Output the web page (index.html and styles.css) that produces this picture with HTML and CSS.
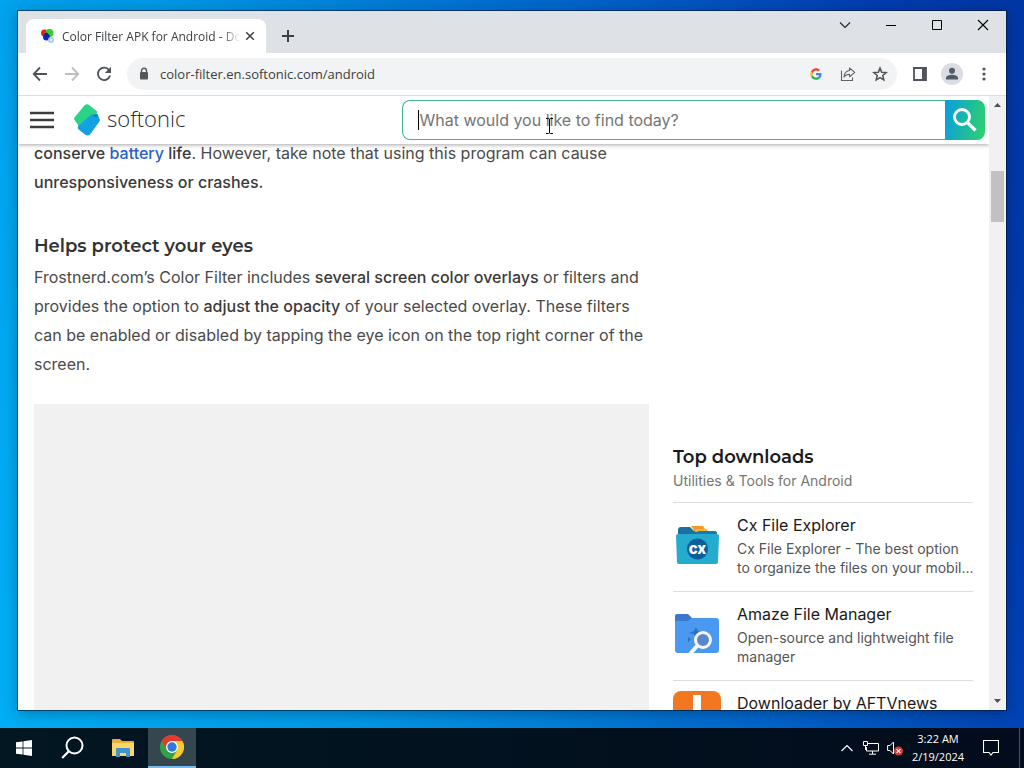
FILE: index.html
```html
<!DOCTYPE html>
<html lang="en">
<head>
    <meta charset="UTF-8">
    <meta name="viewport" content="width=device-width, initial-scale=1.0">
    <title>Color Filter APK for Android - Download</title>
    <link rel="stylesheet" href="styles.css">
</head>
<body>
    <div class="desktop">
        <div class="window">
            <!-- Tab strip -->
            <div class="tab-strip">
                <div class="tab">
                    <svg class="favicon" width="16" height="16" viewBox="0 0 16 16" aria-hidden="true">
                        <circle cx="4.500" cy="5" r="3.500" fill="#d8231c"/>
                        <circle cx="9.500" cy="5" r="4" fill="#2fd12f"/>
                        <circle cx="6.500" cy="9" r="3.500" fill="#1620c8"/>
                        <path d="M5 5a4 4 0 0 1 3 0L6.500 9z" fill="#20242a"/>
                        <circle cx="11" cy="12" r="3" fill="#a9cdf3"/>
                        <circle cx="11" cy="12" r="1" fill="#fff"/>
                    </svg>
                    <span class="tab-title">Color Filter APK for Android - Do</span>
                    <button class="tab-close" aria-label="Close tab">
                        <svg width="10" height="10" viewBox="0 0 10 10"><path d="M1.2 1.2l7.6 7.6M8.8 1.2L1.2 8.8" stroke="#3c4043" stroke-width="1.5"/></svg>
                    </button>
                </div>
                <button class="new-tab" aria-label="New tab">
                    <svg width="14" height="14" viewBox="0 0 14 14"><path d="M7 1v12M1 7h12" stroke="#3c4043" stroke-width="2"/></svg>
                </button>
                <div class="window-buttons">
                    <button aria-label="Search tabs"><svg width="12" height="12" viewBox="0 0 12 12"><path d="M1 3.5l5 5 5-5" fill="none" stroke="#222" stroke-width="1.1"/></svg></button>
                    <button aria-label="Minimize"><svg width="12" height="12" viewBox="0 0 12 12"><path d="M1 6.5h10" stroke="#000"/></svg></button>
                    <button aria-label="Maximize"><svg width="12" height="12" viewBox="0 0 12 12"><path d="M1.5 1.5h9v9h-9z" fill="none" stroke="#000"/></svg></button>
                    <button aria-label="Close"><svg width="12" height="12" viewBox="0 0 12 12"><path d="M1 1l10 10M11 1L1 11" stroke="#000" stroke-width="1.1"/></svg></button>
                </div>
            </div>

            <!-- Toolbar -->
            <div class="toolbar">
                <button class="tool" aria-label="Back"><svg width="16" height="16" viewBox="0 0 16 16"><path d="M15 8H2M8 1.5L1.7 8 8 14.5" fill="none" stroke="#50545a" stroke-width="1.8"/></svg></button>
                <button class="tool" aria-label="Forward"><svg width="16" height="16" viewBox="0 0 16 16"><path d="M1 8h13M8 1.5L14.3 8 8 14.5" fill="none" stroke="#bcbec1" stroke-width="1.8"/></svg></button>
                <button class="tool" aria-label="Reload"><svg width="16" height="16" viewBox="0 0 16 16"><path d="M13.2 4.2A6.2 6.2 0 1 0 14.1 9.6" fill="none" stroke="#50545a" stroke-width="1.8"/><path d="M15 .8V7H8.8z" fill="#50545a"/></svg></button>
                <div class="omnibox">
                    <svg class="lock" width="10" height="14" viewBox="0 0 10 14" aria-hidden="true"><path d="M2.5 6V3.7a2.5 2.5 0 0 1 5 0V6" fill="none" stroke="#55585c" stroke-width="1.4"/><rect x="1" y="5" width="8" height="7.5" rx="1" fill="#55585c"/></svg>
                    <input class="address" type="text" aria-label="Address" value="color-filter.en.softonic.com/android">
                    <button class="tool" aria-label="Google search">
                        <svg width="12" height="12" viewBox="0 0 48 48"><path d="M46 24.500c0-1.600-.1-3.100-.4-4.500H24v9h12.400c-.6 3-2.200 5.400-4.700 7.100l7.200 5.600C43.200 37.600 46 31.700 46 24.500z" fill="#4285f4"/><path d="M24 47c6 0 11-2 14.900-5.300l-7.200-5.600C29.700 37.400 27 38.300 24 38.300c-5.900 0-10.800-3.900-12.600-9.200L4 34.800C7.700 42 15.200 47 24 47z" fill="#34a853"/><path d="M11.400 29.100a14 14 0 0 1 0-9.200L4 14.200a23 23 0 0 0 0 20.600z" fill="#fbbc05"/><path d="M24 9.900c3.600 0 6.800 1.200 9.300 3.600l6.300-6.300C35.600 3.500 30.300 1 24 1 15.200 1 7.700 6.100 4 14.200l7.400 5.700C13.200 14.300 18.100 9.900 24 9.900z" fill="#ea4335"/></svg>
                    </button>
                    <button class="tool" aria-label="Share">
                        <svg width="16" height="16" viewBox="0 0 16 16"><path d="M1.500 4.500v10h11v-3" fill="none" stroke="#5f6368" stroke-width="1.1"/><path d="M9.500 2l5.300 4.400-5.300 4.300V8.200C7 8.200 5.300 9 4 11c.2-3.600 2.300-6 5.500-6.500z" fill="none" stroke="#5f6368" stroke-width="1.1" stroke-linejoin="round"/></svg>
                    </button>
                    <button class="tool" aria-label="Bookmark this tab">
                        <svg width="16" height="16" viewBox="0 0 16 16"><path d="M8 2l1.700 4.200 4.500.4-3.400 2.900 1 4.500L8 11.600 4.200 14l1-4.500-3.400-2.900 4.500-.4z" fill="none" stroke="#50545a" stroke-width="1.5"/></svg>
                    </button>
                </div>
                <button class="tool" aria-label="Side panel"><svg width="16" height="16" viewBox="0 0 16 16"><path d="M2 2h12v12H2z" fill="none" stroke="#50545a" stroke-width="1.8"/><path d="M10 2h4v12h-4z" fill="#50545a"/></svg></button>
                <button class="tool" aria-label="Profile"><svg width="22" height="22" viewBox="0 0 22 22"><circle cx="11" cy="11" r="11" fill="#dadce3"/><circle cx="11" cy="7.700" r="3" fill="#525a66"/><path d="M5 16.500v-1.400c0-2.200 3.500-3.300 6-3.300s6 1.100 6 3.300v1.400z" fill="#525a66"/></svg></button>
                <button class="tool" aria-label="Menu"><svg width="4" height="14" viewBox="0 0 4 14"><circle cx="2" cy="2" r="1.600" fill="#50545a"/><circle cx="2" cy="7" r="1.600" fill="#50545a"/><circle cx="2" cy="12" r="1.600" fill="#50545a"/></svg></button>
            </div>

            <!-- Page -->
            <div class="viewport">
                <div class="page">
                    <header class="site-header">
                        <button class="menu-btn" aria-label="Menu"><svg width="24" height="18" viewBox="0 0 24 18"><path d="M0 2h24M0 9h24M0 16h24" stroke="#3c3c3c" stroke-width="2.600"/></svg></button>
                        <a class="logo" href="#">
                            <svg width="26" height="32" viewBox="0 0 26 32" aria-hidden="true">
                                <path d="M4 21.500L16.500 10.500 24 11l1.600 4.300q.6 1.300-.3 2.500L16 30.500q-2.500 2-5 0L4.200 25q-1-1 0-2.200z" fill="#12a2e2"/>
                                <path d="M10.600 1.300q2.200-1.700 4.400-.3l7.700 6q1 .9.300 2l-1 1.500-5 .2L4.500 21.500.5 16q-.9-1.400.2-2.800z" fill="#2bd484"/>
                                <path d="M17 10.700l7-.6-1.600 3.200z" fill="#0f7fae"/>
                            </svg>
                            <span class="logo-text">softonic</span>
                        </a>
                        <form class="search">
                            <input class="search-input" type="search" aria-label="Search" placeholder="What would you like to find today?">
                            <span class="caret"></span>
                            <svg class="pointer" width="7" height="16" viewBox="0 0 7 16" aria-hidden="true"><path d="M0 .5h2.500l1 .6 1-.6H7M3.500 1v14M0 15.500h2.500l1-.6 1 .6H7" fill="none" stroke="#000"/></svg>
                            <button class="search-btn" aria-label="Search"><svg width="26" height="26" viewBox="0 0 26 26"><circle cx="10" cy="10" r="7.500" fill="none" stroke="#fff" stroke-width="2.800"/><path d="M15.300 15.300l8.200 8.200" stroke="#fff" stroke-width="3.200"/></svg></button>
                        </form>
                    </header>
                    <div class="content">
                        <main class="article">
                            <p><strong>conserve <a href="#">battery</a> life</strong>. However, take note that using this program can cause <strong>unresponsiveness or crashes.</strong></p>
                            <h2>Helps protect your eyes</h2>
                            <p>Frostnerd.com’s Color Filter includes <strong>several screen color overlays</strong> or filters and provides the option to <strong>adjust the opacity</strong> of your selected overlay. These filters can be enabled or disabled by tapping the eye icon on the top right corner of the screen.</p>
                            <div class="ad"></div>
                        </main>
                        <aside class="sidebar">
                            <div class="sidebar-slot"></div>
                            <h2>Top downloads</h2>
                            <p class="category">Utilities &amp; Tools for Android</p>
                            <ul class="downloads">
                                <li>
                                    <svg class="app-icon" width="48" height="48" viewBox="0 0 48 48" aria-hidden="true">
                                        <path d="M5 9q0-3 3-3h9l4 4h20q3 0 3 3v8H5z" fill="#1d6f9f"/>
                                        <path d="M18 5h12l4 6H22z" fill="#f59a23"/>
                                        <path d="M22 8h12l2 5H25z" fill="#f7b34c"/>
                                        <path d="M25 10h16q3 0 3 3v4H20z" fill="#1a7aa8"/>
                                        <path d="M3 15q0-2 2-2h38q3 0 3 2l-1 26q0 2-3 2H6q-2 0-2-2z" fill="#25abcd"/>
                                        <circle cx="24.500" cy="28" r="10.500" fill="#0c5d9b"/>
                                        <text class="app-icon-text" x="24.500" y="33" text-anchor="middle">cx</text>
                                    </svg>
                                    <div class="app">
                                        <h3>Cx File Explorer</h3>
                                        <p>Cx File Explorer - The best option<br>to organize the files on your mobil...</p>
                                    </div>
                                </li>
                                <li>
                                    <svg class="app-icon" width="48" height="48" viewBox="0 0 48 48" aria-hidden="true">
                                        <path d="M2 6q0-2 2-2h11l4 4v8H2z" fill="#3a78cf"/>
                                        <path d="M2 11h13l4-3h24q3 0 3 3v29q0 3-3 3H5q-3 0-3-3z" fill="#4a98ef"/>
                                        <path d="M23 17l2 4 4 1-4 2-2 4-2-4-5-1 5-2zM15 27l3 2-3 3z" fill="#2f6fc4"/>
                                        <circle cx="30" cy="30" r="7.500" fill="#5a86cb" stroke="#f4f7fc" stroke-width="3"/>
                                        <path d="M24.500 35.500L17 44" stroke="#f4f7fc" stroke-width="4"/>
                                    </svg>
                                    <div class="app">
                                        <h3>Amaze File Manager</h3>
                                        <p>Open-source and lightweight file manager</p>
                                    </div>
                                </li>
                                <li>
                                    <svg class="app-icon" width="48" height="48" viewBox="0 0 48 48" aria-hidden="true">
                                        <rect width="48" height="48" rx="8" fill="#f37721"/>
                                        <path d="M20 4h8v20h8L24 38 12 24h8z" fill="#fff"/>
                                    </svg>
                                    <div class="app">
                                        <h3>Downloader by AFTVnews</h3>
                                    </div>
                                </li>
                            </ul>
                        </aside>
                    </div>
                </div>
                <div class="scrollbar">
                    <svg class="scroll-arrow" width="7" height="4" viewBox="0 0 7 4"><path d="M0 4l3.500-4L7 4z" fill="#505050"/></svg>
                    <div class="scroll-track"><div class="scroll-thumb"></div></div>
                    <svg class="scroll-arrow" width="7" height="4" viewBox="0 0 7 4"><path d="M0 0l3.500 4L7 0z" fill="#505050"/></svg>
                </div>
            </div>
        </div>
    </div>

    <!-- Taskbar -->
    <div class="taskbar">
        <button class="task" aria-label="Start"><svg width="16" height="16" viewBox="0 0 16 16"><path d="M0 2.300l6.600-.9v6.200H0zM7.400 1.300L16 .1v7.500H7.400zM0 8.400h6.600v6.200L0 13.700zM7.400 8.400H16v7.500l-8.600-1.200z" fill="#fff"/></svg></button>
        <button class="task task-wide" aria-label="Search"><svg width="24" height="24" viewBox="0 0 24 24"><circle cx="13.500" cy="9.500" r="8" fill="none" stroke="#fff" stroke-width="2"/><path d="M7.800 15.200L1.200 22" stroke="#fff" stroke-width="2.200"/></svg></button>
        <button class="task task-wide" aria-label="File Explorer"><svg width="22" height="20" viewBox="0 0 22 20"><path d="M0 2q0-1 1-1h7l2 2h11q1 0 1 1v13H0z" fill="#e9b03a"/><path d="M0 5h22v13H0z" fill="#fbd667"/><path d="M4 11q0-1 1-1h12q1 0 1 1v8h-4v-4H8v4H4z" fill="#3f93cf"/></svg></button>
        <button class="task active" aria-label="Google Chrome"><svg width="24" height="24" viewBox="0 0 24 24"><circle cx="12" cy="12" r="12" fill="#2fa24c"/><path d="M1.600 6A12 12 0 0 1 22.400 6H12l-5.200 9z" fill="#e33b2e"/><path d="M22.400 6A12 12 0 0 1 12 24l5.200-9L12 6z" fill="#fcc934"/><circle cx="12" cy="12" r="6" fill="#fff"/><circle cx="12" cy="12" r="4.700" fill="#2f78dd"/></svg></button>
        <div class="tray">
            <button class="tray-btn" aria-label="Show hidden icons"><svg width="12" height="12" viewBox="0 0 12 12"><path d="M.5 9L6 3.500 11.500 9" fill="none" stroke="#fff" stroke-width="1.200"/></svg></button>
            <button class="tray-btn" aria-label="Network"><svg width="16" height="14" viewBox="0 0 16 14"><path d="M5 2.500h10.500v7.500H3.500V6M9.500 10v3M6 13.200h7M.5.500h4v4h-4zM2.500 4.500V9" fill="none" stroke="#fff"/></svg></button>
            <button class="tray-btn" aria-label="Volume muted"><svg width="16" height="16" viewBox="0 0 16 16"><path d="M.6 5.500H3L6.500 2v12L3 10.500H.6z" fill="none" stroke="#fff"/><circle cx="11.500" cy="11" r="4.500" fill="#d63a36"/><path d="M9.600 9.100l3.800 3.800M13.400 9.100l-3.800 3.800" stroke="#fff" stroke-width="1.200"/></svg></button>
            <div class="clock">
                <span>3:22 AM</span>
                <span>2/19/2024</span>
            </div>
            <button class="notify" aria-label="Notifications"><svg width="16" height="16" viewBox="0 0 16 16"><path d="M.5.500h15v12H10L8 15l-2-2.500H.5z" fill="none" stroke="#fff" stroke-width="1.100"/></svg></button>
            <div class="show-desktop"></div>
        </div>
    </div>
</body>
</html>
```

FILE: styles.css
```css
* {
    box-sizing: border-box;
}

body {
    margin: 0;
    height: 100vh;
    display: flex;
    flex-direction: column;
    overflow: hidden;
    font-family: 'Inter', sans-serif;
    background: linear-gradient(75deg, #00aff6 0%, #0098e6 30%, #0066cc 62%, #003caf 88%, #0036a4 100%);
}

button {
    border: none;
    background: none;
    padding: 0;
    display: flex;
    align-items: center;
    justify-content: center;
    cursor: pointer;
}

h2, h3, p, ul {
    margin: 0;
    padding: 0;
}

.desktop {
    flex: 1;
    min-height: 0;
    display: flex;
    padding: 11px 18px 18px;
}

.window {
    flex: 1;
    min-width: 0;
    display: flex;
    flex-direction: column;
    background: #fff;
    box-shadow: 0 0 0 1px rgba(0, 20, 50, 0.6), 0 3px 14px rgba(0, 0, 0, 0.3);
}

/* Tab strip */
.tab-strip {
    display: flex;
    height: 42px;
    padding-left: 8px;
    background: #dee1e6;
}

.tab {
    display: flex;
    align-items: center;
    width: 240px;
    height: 34px;
    margin-top: 8px;
    padding: 0 8px 0 14px;
    background: #fff;
    border-radius: 8px 8px 0 0;
}

.tab-title {
    flex: 1;
    margin-left: 6px;
    overflow: hidden;
    white-space: nowrap;
    font-family: 'Open Sans', sans-serif;
    font-size: 12px;
    color: #3c4043;
    -webkit-mask-image: linear-gradient(90deg, #000 90%, transparent);
    mask-image: linear-gradient(90deg, #000 90%, transparent);
}

.tab-close {
    width: 16px;
    height: 16px;
    margin-left: 2px;
}

.new-tab {
    width: 28px;
    height: 28px;
    margin: 11px 0 0 8px;
}

.window-buttons {
    display: flex;
    margin-left: auto;
}

.window-buttons button {
    width: 46px;
    height: 28px;
}

/* Toolbar */
.toolbar {
    display: flex;
    align-items: center;
    height: 43px;
    padding: 0 6px;
    border-bottom: 1px solid #dcdee2;
}

.tool {
    width: 32px;
    height: 32px;
    flex: none;
}

.omnibox {
    flex: 1;
    display: flex;
    align-items: center;
    height: 32px;
    margin: 0 7px;
    padding: 0 1px 0 12px;
    border-radius: 16px;
    background: #f1f3f4;
}

.address {
    flex: 1;
    min-width: 0;
    margin-left: 11px;
    padding: 0;
    border: none;
    outline: none;
    background: none;
    font-family: 'Open Sans', sans-serif;
    font-size: 13px;
    color: #3c4043;
}

/* Page */
.viewport {
    flex: 1;
    min-height: 0;
    display: flex;
}

.page {
    flex: 1;
    min-width: 0;
    overflow: hidden;
}

.site-header {
    position: relative;
    z-index: 1;
    display: flex;
    align-items: center;
    height: 48px;
    padding: 0 4px 0 12px;
    background: #fff;
    box-shadow: 0 1px 4px rgba(0, 0, 0, 0.35);
}

.logo {
    display: flex;
    align-items: center;
    margin-left: 20px;
    text-decoration: none;
}

.logo-text {
    margin-left: 7px;
    padding-bottom: 5px;
    font-family: 'Open Sans', sans-serif;
    font-size: 22px;
    font-weight: 300;
    line-height: 32px;
    color: #2c2d2e;
}

.search {
    position: relative;
    display: flex;
    width: 61%;
    height: 40px;
    margin-left: auto;
}

.search-input {
    flex: 1;
    min-width: 0;
    padding: 0 16px;
    border: 1px solid #3fb391;
    border-right: none;
    border-radius: 8px 0 0 8px;
    outline: none;
    font-family: 'Inter', sans-serif;
    font-size: 16px;
}

.search-input::placeholder {
    color: #757575;
}

.caret {
    position: absolute;
    left: 16px;
    top: 10px;
    width: 1px;
    height: 20px;
    background: #000;
}

.pointer {
    position: absolute;
    left: 144px;
    top: 18px;
}

.search-btn {
    width: 40px;
    border-radius: 0 8px 8px 0;
    background: linear-gradient(100deg, #0a9fdc 5%, #2ed06f 95%);
}

.content {
    display: grid;
    grid-template-columns: 1fr 300px;
    gap: 24px;
    margin-top: -5px;
    padding: 0 16px;
}

.article p {
    font-size: 16px;
    line-height: 29px;
    color: #4a4a4a;
}

.article strong {
    font-weight: 500;
    color: #3a3a3a;
}

.article a {
    color: #2a5fc4;
    text-decoration: none;
}

.article h2 {
    margin: 35px 0 3px;
    color: #333;
}

.article h2,
.sidebar h2 {
    font-family: 'Montserrat', 'Inter', sans-serif;
    font-size: 18px;
    font-weight: 600;
    line-height: 28px;
}

.ad {
    height: 400px;
    margin-top: 25px;
    background: #f1f1f1;
}

.sidebar-slot {
    height: 304px;
}

.sidebar h2 {
    color: #1a1a1a;
}

.category {
    padding-bottom: 12px;
    border-bottom: 1px solid #ddd;
    font-size: 14px;
    line-height: 19px;
    color: #757575;
}

.downloads {
    list-style: none;
}

.downloads li {
    display: flex;
    align-items: center;
    gap: 16px;
    padding: 10px 0 14px;
    border-bottom: 1px solid #ddd;
}

.app-icon {
    flex: none;
}

.app-icon-text {
    font-size: 15px;
    font-weight: 800;
    fill: #fff;
}

.app {
    align-self: flex-start;
    min-width: 0;
    margin-right: -4px;
}

.app h3 {
    font-size: 16px;
    font-weight: 400;
    line-height: 24px;
    color: #1a1a1a;
}

.app p {
    margin-top: 2px;
    font-size: 14px;
    line-height: 19px;
    color: #555;
}

/* Scrollbar */
.scrollbar {
    display: flex;
    flex-direction: column;
    align-items: center;
    width: 17px;
    padding: 7px 0;
    background: #f1f1f1;
}

.scroll-track {
    flex: 1;
    align-self: stretch;
    padding: 64px 2px 0;
}

.scroll-thumb {
    height: 51px;
    background: #c1c1c1;
}

/* Taskbar */
.taskbar {
    display: flex;
    height: 40px;
    background: linear-gradient(90deg, #021722, #020c1c);
}

.task {
    width: 48px;
}

.task-wide {
    width: 50px;
}

.task.active {
    background: #36464f;
    border-bottom: 2px solid #76b9ed;
}

.tray {
    display: flex;
    align-items: center;
    margin-left: auto;
    color: #fff;
}

.tray-btn {
    width: 24px;
    height: 40px;
}

.clock {
    display: flex;
    flex-direction: column;
    align-items: center;
    width: 62px;
    font-family: 'Open Sans', sans-serif;
    font-size: 11px;
    line-height: 18px;
}

.notify {
    width: 44px;
    height: 40px;
}

.show-desktop {
    width: 5px;
    height: 40px;
    margin-left: 6px;
    border-left: 1px solid #4a5360;
}
```
